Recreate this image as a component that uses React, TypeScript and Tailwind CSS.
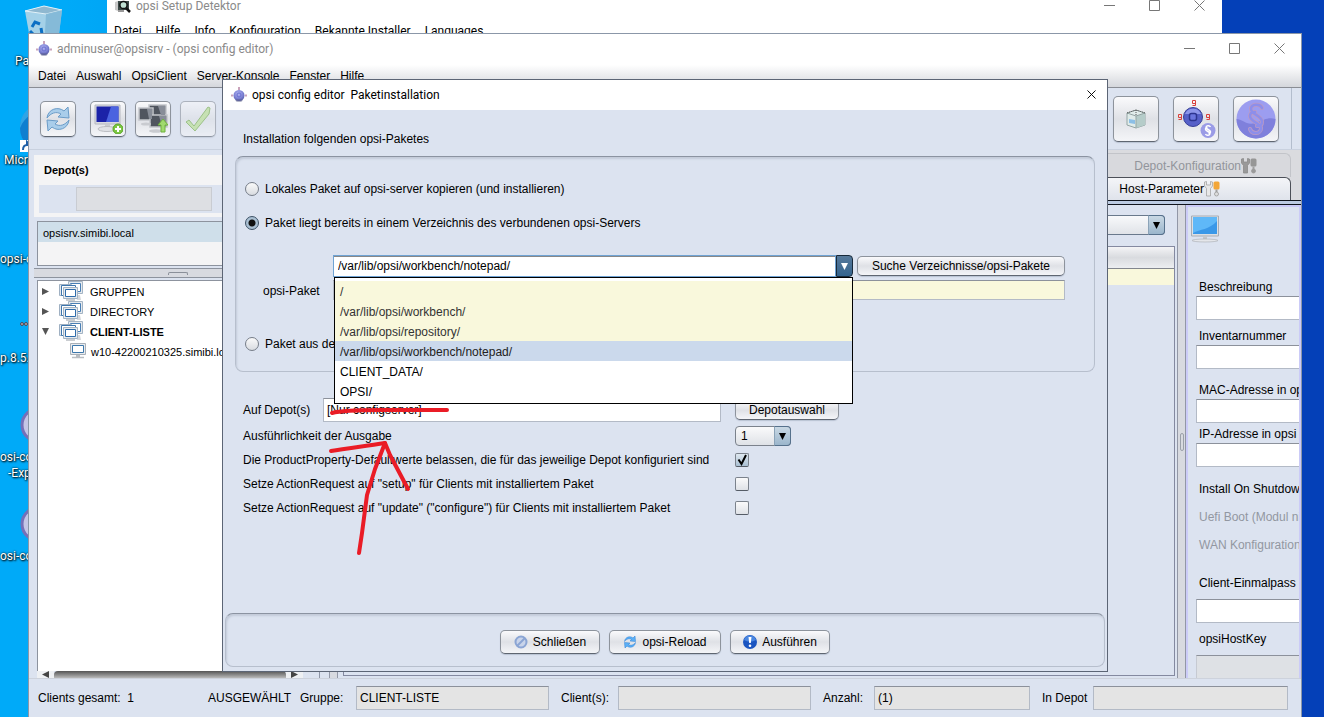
import { ReactNode } from 'react'
import { X } from 'lucide-react'

const buttonStyle =
  'flex items-center justify-center rounded-[5px] border border-[#8d939c] border-b-[#5f6671] bg-linear-to-b from-[#fafafc] via-[#dfe1e6] to-[#f4f5f8] shadow-[0_1px_1px_#b9c2d2]'
const fieldStyle = 'min-w-0 border border-[#b3bac6] border-t-[#8c919b] px-[3px] outline-none'

function OpsiLogo() {
  return (
    <svg className="h-4 w-4 shrink-0" viewBox="0 0 16 16" aria-hidden="true">
      <defs>
        <radialGradient id="opsi-ball" cx="45%" cy="35%" r="65%">
          <stop offset="0" stopColor="#b3b6f2" />
          <stop offset="0.6" stopColor="#7f84d6" />
          <stop offset="1" stopColor="#5a5fae" />
        </radialGradient>
      </defs>
      <path d="M8 0v3M0 8.500h2M14 8.500h2" stroke="#c9a3bb" strokeWidth="2" />
      <circle cx="8" cy="8.500" r="5.500" fill="url(#opsi-ball)" />
      <ellipse cx="8" cy="13.500" rx="3.500" ry="1.300" fill="#5a5f8a" opacity="0.6" />
      <circle cx="8" cy="8" r="2" fill="none" stroke="#6a70d0" />
    </svg>
  )
}

function DetectorIcon() {
  return (
    <svg className="h-4 w-4 shrink-0" viewBox="0 0 16 16" aria-hidden="true">
      <path d="M0 4l3-1v10l-3-1z" fill="#c9c9c9" />
      <path d="M3 3h11v9H3z" fill="#3c4a48" />
      <circle cx="8.500" cy="7" r="3.600" fill="#bfe0d2" stroke="#111" strokeWidth="1.500" />
      <path d="M11 10l4 4" stroke="#111" strokeWidth="2.500" />
      <path d="M3 13h6" stroke="#999" strokeWidth="2" />
    </svg>
  )
}

function ReloadIcon({ className, light }: { className: string; light?: boolean }) {
  const fill = light ? '#a9cdea' : '#5cb0f6'
  const stroke = light ? '#6b9cc8' : '#2a7fd4'
  return (
    <svg className={className} viewBox="0 0 28 28" aria-hidden="true">
      <g fill={fill} stroke={stroke} strokeWidth="1" strokeLinejoin="round">
        <path d="M3 13C4 4 14 1 20 6l4-4 1 11-11-1 3-3c-5-3-10-1-14 4z" />
        <path d="M25 15c-1 9-11 12-17 7l-4 4-1-11 11 1-3 3c5 3 10 1 14-4z" />
      </g>
    </svg>
  )
}

function NewClientIcon() {
  return (
    <svg className="h-[30px] w-[30px]" viewBox="0 0 30 30" aria-hidden="true">
      <path d="M2 1h25v19H2z" fill="#d8dae0" stroke="#b5b8c0" />
      <path d="M3.500 2.500h22V18h-22z" fill="#1b22a8" />
      <path d="M18 2.500h7.500V18H13z" fill="#4a63e0" />
      <path d="M12 20h5v4h-5z" fill="#c8cad0" />
      <ellipse cx="14" cy="25" rx="9" ry="2.500" fill="#e0e2e6" stroke="#bbbdc2" />
      <circle cx="25" cy="25" r="5" fill="#7cc842" stroke="#5aa528" />
      <path d="M25 22v6M22 25h6" stroke="#fff" strokeWidth="2" />
    </svg>
  )
}

function ClientsIcon() {
  return (
    <svg className="h-[30px] w-[30px]" viewBox="0 0 30 30" aria-hidden="true">
      <g fill="#50555f" stroke="#c3c6cc" strokeWidth="1.500">
        <path d="M11 1h17v12H11z" />
        <path d="M1 4h14v12H1z" />
        <path d="M12 11h17v12H12z" />
      </g>
      <path d="M20 2h7v9h-4zM9 5h5v10h-3zM21 12h7v10h-4z" fill="#888d98" />
      <ellipse cx="8" cy="20" rx="5" ry="1.500" fill="#c9cbd0" />
      <ellipse cx="18" cy="27" rx="7" ry="1.800" fill="#c9cbd0" />
      <path d="M25 15l5 6h-3v7h-4v-7h-3z" fill="#a0d96e" stroke="#6fb23c" />
    </svg>
  )
}

function CheckIcon() {
  return (
    <svg className="h-[30px] w-[30px]" viewBox="0 0 30 30" aria-hidden="true">
      <ellipse cx="16" cy="27" rx="11" ry="1.500" fill="#eceff2" />
      <path d="M3 18l3-2 5 6L25 3l2 1-1 6-14 17z" fill="#b9e08c" stroke="#72ab45" />
    </svg>
  )
}

function BoxIcon() {
  return (
    <svg className="h-5 w-5" viewBox="0 0 20 20" aria-hidden="true">
      <path d="M1 4l9-3 9 3v12l-9 3-9-3z" fill="#e0ecea" stroke="#94a5a4" />
      <path d="M10 7l9-3v12l-9 3z" fill="#b5ccc9" />
      <path d="M1 4l9 3 9-3M10 7v12" fill="none" stroke="#94a5a4" />
      <path d="M3 10l6 1v4l-6-1z" fill="#8cbfe6" />
      <path d="M1 4l9-3 9 3M10 1v6" fill="none" stroke="#555" strokeDasharray="1 1" />
    </svg>
  )
}

function LicenseSmallIcon() {
  return (
    <svg className="h-10 w-10" viewBox="0 0 40 40" aria-hidden="true">
      <g fill="none" stroke="#d8403c">
        <path d="M16.500 1.500h3v3h-3zM19.500 4v2.500h-3M2.500 15.500h3v3h-3zM5.500 18v2.500h-3M30.500 15.500h3v3h-3zM33.500 18v2.500h-3" />
      </g>
      <circle cx="17" cy="18" r="9.500" fill="#5660c8" stroke="#383f96" />
      <path d="M9 15a8.500 8 0 0 1 16 0z" fill="#8d96ea" />
      <rect x="13.500" y="14.500" width="7" height="7" rx="2" fill="#6a75de" stroke="#2d3590" strokeWidth="1.500" />
      <circle cx="32" cy="31.500" r="7.500" fill="#9a9be6" />
      <path
        d="M34.500 28c-1-2-4.500-1.500-4.500.5 0 2 4.500 2 4.500 4.300 0 1-.8 1.500-2 1.500M29.500 35c1 2 4.500 1.500 4.500-.5 0-2-4.500-2-4.500-4.300 0-1 .8-1.500 2-1.500"
        fill="none"
        stroke="#fff"
        strokeWidth="1.500"
      />
    </svg>
  )
}

function LicenseIcon() {
  const sign =
    'M26 9c-2-5-11-4-11 1 0 6 11 6 11 13 0 3-2 4-5 4M14 30c2 6 11 5 11-1 0-5-11-6-11-12 0-3 2-4 5-4'
  return (
    <svg className="h-10 w-10" viewBox="0 0 40 40" aria-hidden="true">
      <circle cx="20" cy="20" r="19.500" fill="#9c9df0" />
      <path d="M.500 20c6 0 10 7 19 4s12-6 20-4a19.500 19.500 0 0 1-39 0z" fill="#7f80dc" />
      <path d={sign} fill="none" stroke="#bd9ac4" strokeWidth="4" strokeLinecap="round" />
      <path d={sign} fill="none" stroke="#8d8eea" strokeWidth="2.500" strokeLinecap="round" />
    </svg>
  )
}

function ToolsIcon({ active }: { active?: boolean }) {
  return (
    <svg className="h-4 w-4 shrink-0" viewBox="0 0 16 16" aria-hidden="true">
      <path
        d="M.500 1v4l2 2.500V15h4V7.500l2-2.500V1l-2-.5V4h-4V.500z"
        fill={active ? '#e8e8e8' : '#999'}
        stroke={active ? '#a5a5a5' : '#8a8a8a'}
        strokeWidth="0.800"
      />
      <rect x="9.500" y="0.500" width="6" height="8" rx="1.500" fill={active ? '#f2a638' : '#969696'} />
      <path d="M11.500 8.500h2v3h-2z" fill="#a0a0a0" />
      <circle cx="12.500" cy="13" r="2" fill={active ? '#ddd' : '#999'} stroke="#999" strokeWidth="0.800" />
    </svg>
  )
}

function MonitorIcon() {
  return (
    <svg className="h-7 w-7" viewBox="0 0 28 28" aria-hidden="true">
      <path d="M.500 1h27v20H.500z" fill="#dcdfe4" stroke="#a8adb5" />
      <path d="M2 2h24v17H2z" fill="#3a98e8" />
      <path d="M2 2h24v4C18 15 9 14 2 18z" fill="#5fb8f8" />
      <path d="M12 21h4v4h-4z" fill="#c4c7cc" />
      <ellipse cx="14" cy="25.500" rx="13" ry="1.500" fill="#e4e6ea" stroke="#a8abb0" strokeWidth="0.600" />
    </svg>
  )
}

function GroupIcon() {
  return (
    <svg className="h-5 w-6 shrink-0" viewBox="0 0 24 20" aria-hidden="true">
      <path d="M16 14l2 5h4l-1-5z" fill="#d5d8dc" />
      <g fill="#fff">
        <path d="M9.500.500h14v12h-14z" fill="#e6eaee" stroke="#a4b4c4" />
        <path d="M11.500 2.500h10v8h-10z" stroke="#4a7fb4" />
        <path d="M.500 3.500h12v11H.500z" fill="#e6eaee" stroke="#9fb0c2" />
        <path d="M2.500 4.500h14v10h-14z" stroke="#3d75ac" />
        <path d="M4.500 6.500h14v11h-14z" fill="#e6eaee" stroke="#a4b4c4" />
        <path d="M6.500 8.500h10v7h-10z" stroke="#2f6cab" />
      </g>
      <path d="M7 19h9" stroke="#b9bdc2" strokeWidth="1.500" />
    </svg>
  )
}

function ClientIcon() {
  return (
    <svg className="h-4 w-4 shrink-0" viewBox="0 0 16 16" aria-hidden="true">
      <path d="M.500.500h15v11H.500z" fill="#e8ebee" stroke="#a9b0b8" />
      <path d="M2.500 2.500h11v7h-11z" fill="#fff" stroke="#3d78ac" />
      <path d="M6 12h4v2H6z" fill="#b9bdc2" />
      <path d="M2 14.500h12" stroke="#b9bdc2" strokeWidth="1.500" />
    </svg>
  )
}

function TrashIcon() {
  return (
    <svg className="h-12 w-10" viewBox="0 0 40 48" aria-hidden="true">
      <path d="M1 6L20 1l18 4-5 40H8z" fill="#b6d5e6" opacity="0.9" />
      <path d="M1 6l19-5 18 4-16 4z" fill="#8fb8d0" stroke="#e2f1f8" />
      <path d="M22 9l16-4-5 40H20z" fill="#7db4d3" opacity="0.8" />
      <g fill="none" stroke="#0b6fc4" strokeWidth="3">
        <path d="M8 22l3-5 5 2M17 23l1 6-4 2M10 30l-4-4" />
      </g>
    </svg>
  )
}

function EdgeIcon() {
  return (
    <svg className="h-12 w-12" viewBox="-4 0 48 48" aria-hidden="true">
      <circle cx="24" cy="24" r="24" fill="#0f7fd0" />
      <path d="M0 24C5 12 15 8 24 0 9 0 0 10 0 24z" fill="#2fa4e6" />
      <path d="M0 36h12v12H0z" fill="#fff" />
      <path d="M3 46c0-4 2-5 4-5v-3l4 4" stroke="#1d5fa8" strokeWidth="2" fill="none" />
    </svg>
  )
}

function OpsiRingIcon() {
  return (
    <svg className="h-10 w-12" viewBox="-4 0 48 40" aria-hidden="true">
      <ellipse cx="22" cy="20" rx="20" ry="18" fill="#c4c6e6" stroke="#7570b8" strokeWidth="3" />
    </svg>
  )
}

function GlassesIcon() {
  return (
    <svg className="h-12 w-12" viewBox="-3 0 48 48" aria-hidden="true">
      <g fill="#b8aab0" stroke="#4b4a58">
        <circle cx="3" cy="22" r="1.500" />
        <circle cx="7" cy="22" r="1.500" />
      </g>
    </svg>
  )
}

function ForbiddenIcon() {
  return (
    <svg className="h-[14px] w-[14px]" viewBox="0 0 14 14" aria-hidden="true">
      <circle cx="7" cy="7" r="5.500" fill="#c9d4ea" stroke="#8ba5d4" strokeWidth="2" />
      <path d="M3 11l8-8" stroke="#8ba5d4" strokeWidth="2" />
    </svg>
  )
}

function ExecuteIcon() {
  return (
    <svg className="h-[14px] w-[14px]" viewBox="0 0 14 14" aria-hidden="true">
      <circle cx="7" cy="7" r="7" fill="#1b55c0" />
      <path d="M1 5a6.300 6.300 0 0 1 12 0 12 12 0 0 1-12 0z" fill="#4a86e0" />
      <path d="M5.500 2h3l-.7 6H6.200z" fill="#fff" />
      <circle cx="7" cy="10.700" r="1.300" fill="#fff" />
    </svg>
  )
}

function Caret({ className }: { className: string }) {
  return (
    <svg className={className} viewBox="0 0 8 8" fill="currentColor" aria-hidden="true">
      <path d="M0 0h8L4 8z" />
    </svg>
  )
}

function WindowButtons() {
  return (
    <div className="ml-auto flex items-center gap-[34px] text-[#777]">
      <button aria-label="Minimieren">
        <svg className="h-[11px] w-[11px]" viewBox="0 0 11 11" stroke="currentColor" aria-hidden="true">
          <path d="M0 5.500h11" />
        </svg>
      </button>
      <button aria-label="Maximieren">
        <svg className="h-[11px] w-[11px]" viewBox="0 0 11 11" fill="none" stroke="currentColor" aria-hidden="true">
          <path d="M.500.500h10v10H.500z" />
        </svg>
      </button>
      <button aria-label="Fenster schließen">
        <svg className="h-[11px] w-[11px]" viewBox="0 0 11 11" stroke="currentColor" aria-hidden="true">
          <path d="M.500.500l10 10M10.500.500l-10 10" />
        </svg>
      </button>
    </div>
  )
}

const shortcuts = [
  { icon: <TrashIcon />, label: 'Pa', align: 'pl-[15px]' },
  { icon: <EdgeIcon />, label: 'Micr', align: 'pl-1' },
  { icon: null, label: 'opsi-c', align: '' },
  { icon: <GlassesIcon />, label: 'p.8.5.', align: '' },
  { icon: <OpsiRingIcon />, label: 'osi-co', label2: '-Exp', align: '' },
  { icon: <OpsiRingIcon />, label: 'osi-co', align: '' },
]

function Desktop() {
  return (
    <ul className="w-[66px] pt-1 font-[Roboto,'Open_Sans',sans-serif] text-[12px] leading-4 text-white [text-shadow:1px_1px_2px_#000,0_0_2px_#000]">
      {shortcuts.map((s, i) => (
        <li key={i} className="h-[99px]">
          <div className="flex h-[49px] items-center justify-end pr-[2px]">{s.icon}</div>
          <div className={s.align}>{s.label}</div>
          {s.label2 && <div className="pl-2">{s.label2}</div>}
        </li>
      ))}
    </ul>
  )
}

function DetectorWindow() {
  return (
    <section className="absolute -top-[10px] right-[102px] left-[107px] h-24 bg-white font-[Roboto,'Open_Sans',sans-serif] text-[12px]">
      <div className="flex h-[31px] items-center gap-[5px] pr-[17px] pl-2 text-[#8a8a8a]">
        <DetectorIcon />
        <span>opsi Setup Detektor</span>
        <WindowButtons />
      </div>
      <nav className="flex gap-[14px] pt-px pl-[7px] text-black">
        {['Datei', 'Hilfe', 'Info', 'Konfiguration', 'Bekannte Installer', 'Languages'].map((m) => (
          <button key={m}>{m}</button>
        ))}
      </nav>
    </section>
  )
}

function ToolButton({ label, big, faded, children }: { label: string; big?: boolean; faded?: boolean; children: ReactNode }) {
  return (
    <button
      aria-label={label}
      className={`${buttonStyle} ${big ? 'h-[46px] w-[46px]' : 'h-9 w-9'} ${faded ? 'opacity-60' : ''}`}
    >
      {children}
    </button>
  )
}

function Toolbar() {
  return (
    <div className="flex h-[62px] shrink-0 border-b border-[#c9d1df] pr-[9px]">
      <div className="flex flex-1 items-center border-r border-[#b3bdcd] pr-3 pl-[11px]">
        <div className="flex gap-[9px]">
          <div className="mr-[5px]">
            <ToolButton label="Neu laden">
              <ReloadIcon className="h-7 w-7" light />
            </ToolButton>
          </div>
          <ToolButton label="Neuer Client">
            <NewClientIcon />
          </ToolButton>
          <ToolButton label="Clients setzen">
            <ClientsIcon />
          </ToolButton>
          <ToolButton label="Speichern" faded>
            <CheckIcon />
          </ToolButton>
        </div>
        <div className="ml-auto flex gap-[14px]">
          <ToolButton label="Produkte" big>
            <BoxIcon />
          </ToolButton>
          <ToolButton label="Lizenzen" big>
            <LicenseSmallIcon />
          </ToolButton>
          <ToolButton label="Lizenzverwaltung" big>
            <LicenseIcon />
          </ToolButton>
        </div>
      </div>
    </div>
  )
}

function DepotTree() {
  return (
    <aside className="flex w-[291px] shrink-0 flex-col border-r border-[#8d94a5] pl-[5px] text-[11px]">
      <div className="mt-[5px] bg-[#f4f4f5] pb-1 pl-[5px]">
        <div className="h-[30px] pt-[7px] pl-[5px] leading-4 font-bold">Depot(s)</div>
        <div className="h-7 bg-[#dce3f0] pt-[2px] pl-[37px]">
          <div className="h-6 w-[136px] border border-[#c9ccd2] bg-[#dddfe3]" />
        </div>
      </div>
      <div className="mt-1 ml-[3px] h-[45px] border border-[#8d939e] bg-[#f4f4f5]">
        <div className="h-5 bg-[#cfdfea] pl-[5px] leading-[22px]">opsisrv.simibi.local</div>
      </div>
      <div className="mt-[2px] flex h-[10px] items-center border-y border-[#8d939e] bg-[#d8dae0] pl-[134px]">
        <div className="h-[3px] w-5 rounded-t-xs border border-b-0 border-[#8a8f99]" />
      </div>
      <div className="mt-[2px] ml-[3px] flex-1 border border-b-0 border-[#8d939e] bg-white">
        <ul className="leading-[22px]">
          {['GRUPPEN', 'DIRECTORY', 'CLIENT-LISTE'].map((name, i) => (
            <li key={name} className="flex h-5 items-start pl-1">
              <span className="flex h-5 items-center gap-[10px]">
                <Caret className={`h-[7px] w-[7px] text-[#555] ${i < 2 ? '-rotate-90' : ''}`} />
                <GroupIcon />
              </span>
              <span className={`ml-[7px] ${i === 2 ? 'font-bold' : ''}`}>{name}</span>
            </li>
          ))}
          <li className="flex h-5 items-start pl-8 whitespace-nowrap">
            <span className="flex h-5 items-center">
              <ClientIcon />
            </span>
            <span className="ml-[5px]">w10-42200210325.simibi.lo</span>
          </li>
        </ul>
      </div>
      <div className="ml-[3px] flex h-[7px] pr-4">
        <div className="flex w-[17px] justify-center bg-[#eef0f3]">
          <Caret className="h-[7px] w-[7px] rotate-90 text-[#444]" />
        </div>
        <div className="flex-1 rounded-t-sm bg-linear-to-b from-[#555] to-[#bbb]" />
        <div className="flex w-[17px] justify-center bg-[#eef0f3]">
          <Caret className="h-[7px] w-[7px] -rotate-90 text-[#444]" />
        </div>
      </div>
    </aside>
  )
}

function DetailField({ label, className, gap, disabled }: { label: string; className: string; gap?: boolean; disabled?: boolean }) {
  return (
    <label className={`block ${className}`}>
      <span className={`block h-4 pl-[3px] ${gap ? 'mb-2' : 'mb-px'}`}>{label}</span>
      <input
        type="text"
        disabled={disabled}
        className={`${fieldStyle} block h-6 w-full border-r-0 ${disabled ? 'border-[#c6cad2] bg-[#dee1e5]' : 'bg-white'}`}
      />
    </label>
  )
}

function ClientDetails() {
  return (
    <div className="w-[115px] shrink-0 overflow-hidden border-2 border-b-0 border-[#cbcbf7] leading-4 whitespace-nowrap">
      <div className="h-[72px] pt-2 pl-[3px]">
        <MonitorIcon />
      </div>
      <div className="-mr-[2px] pl-2">
        <DetailField label="Beschreibung" className="" />
        <DetailField label="Inventarnummer" className="mt-2" />
        <DetailField label="MAC-Adresse in opsi" className="mt-[13px]" />
        <DetailField label="IP-Adresse in opsi" className="mt-[3px]" />
        <div className="mt-[14px] pl-[3px]">Install On Shutdow</div>
        <div className="mt-3 pl-[3px] text-[#9297a1]">Uefi Boot (Modul ni</div>
        <div className="mt-3 pl-[3px] text-[#9297a1]">WAN Konfiguration</div>
        <DetailField label="Client-Einmalpass" className="mt-[22px]" gap />
        <DetailField label="opsiHostKey" className="mt-2" gap disabled />
      </div>
    </div>
  )
}

function ConfigTabs() {
  return (
    <div className="flex min-w-0 flex-1 flex-col">
      <div role="tablist" className="bg-[#dadbdf] pt-[3px] pr-[10px]">
        <button
          role="tab"
          className="flex h-6 w-full items-center justify-end rounded-tr-md border border-[#c2c4c9] border-b-0 bg-[#d8d9dd] pr-[33px] text-[#92959b]"
        >
          Depot-Konfiguration
          <ToolsIcon />
        </button>
        <button
          role="tab"
          aria-selected="true"
          className="flex h-[23px] w-full items-center justify-end rounded-tr-md border border-b-0 border-[#4c5058] bg-linear-to-b from-[#f4f5f8] to-[#dfe3eb] pr-[70px]"
        >
          Host-Parameter
          <ToolsIcon active />
        </button>
      </div>
      <div className="h-[5px] shrink-0 border-y border-[#10141c] bg-[#bccbe2]" />
      <div className="flex flex-1">
        <div className="flex min-w-0 flex-1 flex-col pl-[3px]">
          <div className="relative mt-[10px] mr-[10px] h-5">
            <select
              aria-label="Konfiguration"
              className="h-5 w-full appearance-none rounded border border-[#69798c] bg-linear-to-b from-[#f8f9fb] to-[#e0e3e8]"
            />
            <span className="pointer-events-none absolute inset-y-0 right-0 flex w-[17px] items-center justify-center rounded-r border border-[#56718c] border-l-[#8ba3b8] bg-linear-to-b from-[#c9d8e4] to-[#9bb6cc]">
              <Caret className="h-[7px] w-[7px]" />
            </span>
          </div>
          <div className="mt-[11px] mb-[3px] flex-1 border border-[#8489a0]">
            <div className="h-[22px] border-b border-[#82868e] bg-linear-to-b from-[#f4f4f6] via-[#d9dbdf] to-[#eceef1]" />
            <div className="h-4 bg-[#f9f8dc]" />
          </div>
        </div>
        <div className="ml-[2px] flex w-[9px] items-center justify-center border-x border-[#9297a6] bg-[#d8dae0]">
          <div className="h-[18px] w-1 rounded-xs border border-[#9ba0aa]" />
        </div>
        <ClientDetails />
      </div>
    </div>
  )
}

function StatusBar() {
  return (
    <footer className="flex h-[39px] shrink-0 items-center gap-3 border-t border-[#cdd2dc] pr-[13px] pl-[9px]">
      <div className="flex flex-1 items-center">
        <span className="w-[170px]">Clients gesamt:&nbsp; 1</span>
        <span className="w-[92px]">AUSGEWÄHLT</span>
        <label htmlFor="gruppe" className="w-14">
          Gruppe:
        </label>
        <input id="gruppe" readOnly defaultValue="CLIENT-LISTE" className={`${fieldStyle} h-6 flex-1 bg-[#e4e4e4]`} />
      </div>
      <div className="flex w-[250px] items-center">
        <label htmlFor="clients" className="w-[57px]">
          Client(s):
        </label>
        <input id="clients" readOnly className={`${fieldStyle} h-6 flex-1 bg-[#e4e4e4]`} />
      </div>
      <div className="flex w-[207px] items-center">
        <label htmlFor="anzahl" className="w-[51px]">
          Anzahl:
        </label>
        <input id="anzahl" readOnly defaultValue="(1)" className={`${fieldStyle} h-6 flex-1 bg-[#e4e4e4]`} />
      </div>
      <div className="flex w-[246px] items-center">
        <label htmlFor="indepot" className="w-[51px]">
          In Depot
        </label>
        <input id="indepot" readOnly className={`${fieldStyle} h-6 flex-1 bg-[#e4e4e4]`} />
      </div>
    </footer>
  )
}

function ConfigEditor() {
  return (
    <main className="absolute top-[33px] right-[22px] bottom-0 left-7 flex flex-col border border-b-0 border-[#8b97a8] bg-[#dce3f0]">
      <div className="flex h-[31px] shrink-0 items-center gap-[5px] bg-white pr-[16px] pb-[2px] pl-[7px] font-[Roboto,'Open_Sans',sans-serif] text-[#8a8a8a]">
        <OpsiLogo />
        <span>adminuser@opsisrv - (opsi config editor)</span>
        <WindowButtons />
      </div>
      <nav className="flex h-[23px] shrink-0 items-center gap-[10px] border-b border-[#8a8d94] bg-linear-to-b from-white to-[#d5d7dc] pl-[9px]">
        {['Datei', 'Auswahl', 'OpsiClient', 'Server-Konsole', 'Fenster', 'Hilfe'].map((m) => (
          <button key={m}>{m}</button>
        ))}
      </nav>
      <Toolbar />
      <div className="flex min-h-0 flex-1 overflow-hidden">
        <DepotTree />
        <div className="mr-[2px] ml-[9px] w-[9px] border-x border-[#9297a6] bg-[#d8dae0]" />
        <ConfigTabs />
      </div>
      <StatusBar />
    </main>
  )
}

const paths = [
  { name: '/', fixed: true },
  { name: '/var/lib/opsi/workbench/', fixed: true },
  { name: '/var/lib/opsi/repository/', fixed: true },
  { name: '/var/lib/opsi/workbench/notepad/', selected: true },
  { name: 'CLIENT_DATA/' },
  { name: 'OPSI/' },
]

const groupStyle = 'rounded-lg border border-[#b7bfcd] border-t-[#8b93a1] shadow-[inset_1px_2px_2px_#c3cbd9]'

function SourceRadio({ label, checked }: { label: string; checked?: boolean }) {
  return (
    <label className="flex h-4 items-center gap-[6px]">
      <input
        type="radio"
        name="source"
        defaultChecked={checked}
        className="h-[14px] w-[14px] appearance-none rounded-full border border-[#767d88] bg-linear-to-b from-[#fafafa] to-[#d9dce1] checked:border-[#3c5166] checked:bg-[radial-gradient(circle,#111_0_3px,#a9bfd2_4px)]"
      />
      {label}
    </label>
  )
}

function PathCombo() {
  return (
    <div className="relative flex h-[22px] flex-1">
      <input
        id="paket"
        type="text"
        role="combobox"
        aria-expanded="true"
        aria-controls="paths"
        defaultValue="/var/lib/opsi/workbench/notepad/"
        className="min-w-0 flex-1 border border-[#6fa3d4] bg-white px-1 shadow-[inset_0_1px_0_#888] outline-none"
      />
      <button
        aria-label="Verzeichnisse anzeigen"
        className="flex w-[17px] items-center justify-center rounded-r border border-[#17293a] bg-linear-to-b from-[#56799a] to-[#34648e] text-white"
      >
        <Caret className="h-[7px] w-[7px]" />
      </button>
      <ul id="paths" role="listbox" className="absolute top-[22px] right-0 left-px z-10 border border-black bg-white pt-[3px] pb-[2px]">
        {paths.map((p) => (
          <li
            key={p.name}
            role="option"
            aria-selected={!!p.selected}
            className={`h-5 pl-[5px] leading-[22px] ${p.fixed ? 'bg-[#f9f8dc] text-[#333]' : ''} ${p.selected ? 'bg-[#cbd9ec] text-[#222]' : ''}`}
          >
            {p.name}
          </li>
        ))}
      </ul>
    </div>
  )
}

function CheckRow({ label, checked }: { label: string; checked?: boolean }) {
  return (
    <label className="flex h-6 items-center">
      <span className="w-[492px]">{label}</span>
      <span className="relative flex">
        <input
          type="checkbox"
          defaultChecked={checked}
          className="peer h-[14px] w-[14px] appearance-none rounded-xs border border-[#7b828c] border-b-[#555c66] bg-linear-to-b from-[#fafafb] to-[#dfe2e7] checked:from-[#dfe8f0] checked:to-[#a9bfd2]"
        />
        <svg className="absolute inset-0 hidden h-[14px] w-[14px] peer-checked:block" viewBox="0 0 14 14" aria-hidden="true">
          <path d="M3.500 6.500l3 4.500L11 2" fill="none" stroke="#000" strokeWidth="2" />
        </svg>
      </span>
    </label>
  )
}

function InstallDialog() {
  return (
    <section
      role="dialog"
      aria-label="Paketinstallation"
      className="absolute top-[79px] right-[216px] left-[222px] flex h-[593px] flex-col border border-[#5c6575] bg-[#dce3f0]"
    >
      <div className="flex h-[30px] shrink-0 items-center gap-[5px] bg-white pr-2 pb-px pl-2 font-[Roboto,'Open_Sans',sans-serif]">
        <OpsiLogo />
        <span>opsi config editor&nbsp; Paketinstallation</span>
        <button aria-label="Schließen" className="ml-auto">
          <X className="h-[15px] w-[15px]" strokeWidth={1.5} />
        </button>
      </div>
      <h1 className="mt-[21px] mb-[9px] pl-5 leading-4">Installation folgenden opsi-Paketes</h1>
      <div className={`${groupStyle} mx-3 h-[216px] shrink-0 px-[9px] pt-6`}>
        <SourceRadio label="Lokales Paket auf opsi-server kopieren (und installieren)" />
        <div className="mt-[18px]">
          <SourceRadio label="Paket liegt bereits in einem Verzeichnis des verbundenen opsi-Servers" checked />
        </div>
        <div className="mt-6 flex pr-5 pl-[18px]">
          <label htmlFor="paket" className="w-[70px] pt-7 leading-4">
            opsi-Paket
          </label>
          <div className="flex-1">
            <div className="flex gap-1">
              <PathCombo />
              <button className={`${buttonStyle} my-px h-5 w-52`}>Suche Verzeichnisse/opsi-Pakete</button>
            </div>
            <input
              type="text"
              aria-label="Paketdatei"
              className={`${fieldStyle} mt-[3px] block h-5 w-full bg-[#f9f8dc]`}
            />
          </div>
        </div>
        <div className="mt-9">
          <SourceRadio label="Paket aus de" />
        </div>
      </div>
      <div className="mt-[26px] pl-5">
        <div className="mb-[2px] flex h-6 items-center">
          <label htmlFor="depots" className="w-20">
            Auf Depot(s)
          </label>
          <input id="depots" type="text" defaultValue="[Nur configserver]" className={`${fieldStyle} h-6 w-[398px] bg-white`} />
          <button className={`${buttonStyle} ml-[14px] h-5 w-[104px]`}>Depotauswahl</button>
        </div>
        <div className="flex h-6 items-center">
          <label htmlFor="verbosity" className="w-[492px]">
            Ausführlichkeit der Ausgabe
          </label>
          <div className="relative flex w-14">
            <select
              id="verbosity"
              className="h-5 w-full appearance-none rounded border border-[#7b828c] bg-linear-to-b from-[#fafafb] to-[#dfe2e7] pl-[5px]"
            >
              <option>1</option>
            </select>
            <span className="pointer-events-none absolute inset-y-0 right-0 flex w-[17px] items-center justify-center rounded-r border border-[#56718c] border-l-[#8ba3b8] bg-linear-to-b from-[#c9d8e4] to-[#9bb6cc]">
              <Caret className="h-[7px] w-[7px]" />
            </span>
          </div>
        </div>
        <CheckRow label="Die ProductProperty-Defaultwerte belassen, die für das jeweilige Depot konfiguriert sind" checked />
        <CheckRow label={'Setze ActionRequest auf "setup" für Clients mit installiertem Paket'} />
        <CheckRow label={'Setze ActionRequest auf "update" ("configure") für Clients mit installiertem Paket'} />
      </div>
      <div className={`${groupStyle} mx-[2px] mt-auto mb-1 flex h-[54px] items-center justify-center gap-[9px] pt-1`}>
        <button className={`${buttonStyle} h-6 w-[100px] gap-[5px]`}>
          <ForbiddenIcon />
          Schließen
        </button>
        <button className={`${buttonStyle} h-6 w-28 gap-[5px]`}>
          <ReloadIcon className="h-[14px] w-[14px]" />
          opsi-Reload
        </button>
        <button className={`${buttonStyle} h-6 w-[100px] gap-[5px]`}>
          <ExecuteIcon />
          Ausführen
        </button>
      </div>
    </section>
  )
}

// Hand-drawn red marks pointing at the chosen path
function RedMarks() {
  return (
    <svg
      className="pointer-events-none absolute top-[400px] left-[320px] z-20 h-40 w-[140px]"
      viewBox="0 0 140 160"
      fill="none"
      stroke="#ea1c26"
      strokeWidth="4"
      strokeLinecap="round"
      strokeLinejoin="round"
      aria-hidden="true"
    >
      <path d="M12 13c10-3 30-3 50-3h65" />
      <path d="M11 51c18-3 36-5 54-8l5 12 18 34" />
      <path d="M39 153l3-20 5-38 8-26 10-26" />
    </svg>
  )
}

export default function App() {
  return (
    <div className="relative h-screen overflow-hidden bg-linear-to-r from-[#00aaf8] from-5% to-[#0440b8] to-90% font-['Liberation_Sans',Arial,sans-serif] text-[12px] text-black">
      <Desktop />
      <DetectorWindow />
      <ConfigEditor />
      <InstallDialog />
      <RedMarks />
    </div>
  )
}
